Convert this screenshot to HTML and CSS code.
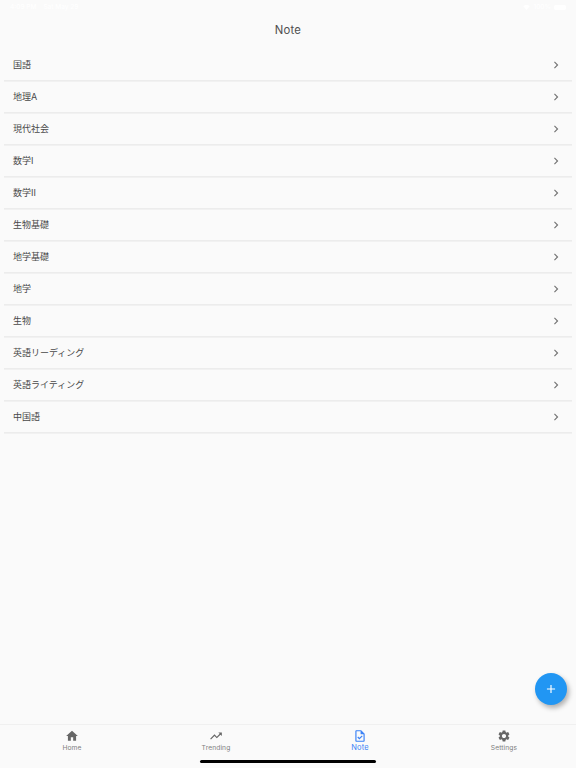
FILE: index.html
```html
<!DOCTYPE html>
<html lang="ja">
<head>
<meta charset="utf-8">
<title>Note</title>
<link rel="stylesheet" href="styles.css">
</head>
<body>
<svg class="defs" width="0" height="0" aria-hidden="true">
  <symbol id="chevron" viewBox="0 0 24 24"><path d="M10 6 8.59 7.41 13.17 12l-4.58 4.59L10 18l6-6z"/></symbol>
</svg>
<div class="screen">
  <div class="status">
    <div class="status-group"><span>4:09 PM</span><span>Sat May 29</span></div>
    <div class="status-group right">
      <svg class="wifi" viewBox="0 0 24 18"><path d="M12 18 0 4Q12-4 24 4z"/></svg>
      <span>100%</span>
      <span class="battery"></span>
    </div>
  </div>
  <header class="header">Note</header>
  <ul class="list">
    <li class="row"><span>国語</span><svg class="chevron"><use href="#chevron"/></svg></li>
    <li class="row"><span>地理A</span><svg class="chevron"><use href="#chevron"/></svg></li>
    <li class="row"><span>現代社会</span><svg class="chevron"><use href="#chevron"/></svg></li>
    <li class="row"><span>数学I</span><svg class="chevron"><use href="#chevron"/></svg></li>
    <li class="row"><span>数学II</span><svg class="chevron"><use href="#chevron"/></svg></li>
    <li class="row"><span>生物基礎</span><svg class="chevron"><use href="#chevron"/></svg></li>
    <li class="row"><span>地学基礎</span><svg class="chevron"><use href="#chevron"/></svg></li>
    <li class="row"><span>地学</span><svg class="chevron"><use href="#chevron"/></svg></li>
    <li class="row"><span>生物</span><svg class="chevron"><use href="#chevron"/></svg></li>
    <li class="row"><span>英語リーディング</span><svg class="chevron"><use href="#chevron"/></svg></li>
    <li class="row"><span>英語ライティング</span><svg class="chevron"><use href="#chevron"/></svg></li>
    <li class="row"><span>中国語</span><svg class="chevron"><use href="#chevron"/></svg></li>
  </ul>
  <button class="fab" aria-label="+"><svg viewBox="0 0 24 24"><path d="M19 13h-6v6h-2v-6H5v-2h6V5h2v6h6v2z"/></svg></button>
  <nav class="tabs">
    <div class="tab"><svg viewBox="0 0 24 24"><path d="M10 20v-6h4v6h5v-8h3L12 3 2 12h3v8z"/></svg><span>Home</span></div>
    <div class="tab"><svg viewBox="0 0 24 24"><path d="m16 6 2.29 2.29-4.88 4.88-4-4L2 16.59 3.41 18l6-6 4 4 6.3-6.29L22 12V6z"/></svg><span>Trending</span></div>
    <div class="tab active"><svg viewBox="0 0 24 24"><path d="M14 2H6c-1.1 0-2 .9-2 2v16c0 1.1.9 2 2 2h12c1.1 0 2-.9 2-2V8l-6-6zm4 18H6V4h7v5h5v11zm-9.180-6.950-1.410 1.410L10.940 18l5.660-5.660-1.410-1.410-4.240 4.240-2.130-2.120z"/></svg><span>Note</span></div>
    <div class="tab"><svg viewBox="0 0 24 24"><path d="M19.140 12.940c.040-.300.060-.610.060-.940 0-.320-.020-.640-.070-.940l2.030-1.580c.180-.140.230-.410.120-.610l-1.920-3.320c-.120-.220-.370-.290-.590-.220l-2.390.960c-.500-.380-1.030-.700-1.620-.940l-.360-2.540c-.040-.240-.240-.410-.480-.410h-3.840c-.240 0-.430.170-.470.410l-.360 2.540c-.590.240-1.130.570-1.620.940l-2.390-.960c-.220-.080-.470 0-.590.220L2.740 8.870c-.120.210-.080.470.120.610l2.030 1.580c-.050.300-.090.630-.090.940s.020.640.070.940l-2.030 1.580c-.180.140-.230.410-.120.610l1.920 3.320c.120.220.370.290.590.220l2.390-.960c.500.380 1.030.700 1.620.940l.360 2.540c.050.240.240.410.480.410h3.840c.240 0 .440-.170.470-.410l.360-2.540c.590-.240 1.130-.560 1.620-.940l2.390.960c.220.080.470 0 .590-.220l1.920-3.320c.120-.220.070-.470-.120-.610l-2.010-1.580zM12 15.600c-1.980 0-3.600-1.620-3.600-3.600s1.620-3.600 3.600-3.600 3.600 1.620 3.600 3.600-1.620 3.600-3.600 3.600z"/></svg><span>Settings</span></div>
  </nav>
  <div class="home-indicator"></div>
</div>
</body>
</html>
```
FILE: styles.css
```css
* { box-sizing: border-box; }
body {
  margin: 0;
  background: #fafafa;
  color: #484848;
  font-family: Inter, "Noto Sans CJK JP", sans-serif;
}
.defs { position: absolute; }
.screen {
  position: relative;
  display: flex;
  flex-direction: column;
  height: 768px;
  overflow: hidden;
}
.status {
  display: flex;
  justify-content: space-between;
  align-items: center;
  height: 14px;
  padding: 0 10px;
  color: #fff;
  font-size: 6.5px;
  font-weight: 500;
}
.status-group { display: flex; align-items: center; gap: 7px; }
.status-group.right { gap: 3px; }
.wifi { width: 7px; height: 5px; fill: #fff; }
.battery { width: 12px; height: 5px; border-radius: 2px; background: #fff; }
.header {
  height: 35px;
  padding-top: 5px;
  line-height: 22px;
  text-align: center;
  font-size: 11.3px;
  letter-spacing: 0.2px;
  color: #505050;
}
.list { flex: 1; margin: 0; padding: 0 4px; list-style: none; }
.row {
  display: flex;
  align-items: center;
  justify-content: space-between;
  height: 32px;
  padding: 0 9px;
  font-size: 9px;
  line-height: 14px;
  box-shadow: inset 0 -1px #ececec, 0 1px #f1f1f1;
}
.chevron { width: 14px; height: 14px; fill: #757575; }
.fab {
  position: absolute;
  left: 535px;
  top: 673px;
  display: flex;
  align-items: center;
  justify-content: center;
  width: 32px;
  height: 32px;
  padding: 0;
  border: 0;
  border-radius: 50%;
  background: #2196f3;
  box-shadow: 2px 3px 5px rgba(0, 0, 0, 0.3);
}
.fab svg { width: 14px; height: 14px; fill: #fff; }
.tabs {
  display: flex;
  height: 44px;
  border-top: 1px solid #f0f0f0;
}
.tab {
  display: flex;
  flex: 1;
  flex-direction: column;
  align-items: center;
  padding-top: 4px;
  color: #808080;
  font-size: 6.7px;
  line-height: 10px;
  letter-spacing: 0.1px;
}
.tab svg { width: 14px; height: 14px; fill: #666; }
.tab.active { color: #3b82f6; font-size: 7.5px; line-height: 9px; }
.tab.active svg { fill: #3b82f6; }
.home-indicator {
  position: absolute;
  left: 200px;
  top: 760px;
  width: 176px;
  height: 3px;
  border-radius: 2px;
  background: #000;
}
```
